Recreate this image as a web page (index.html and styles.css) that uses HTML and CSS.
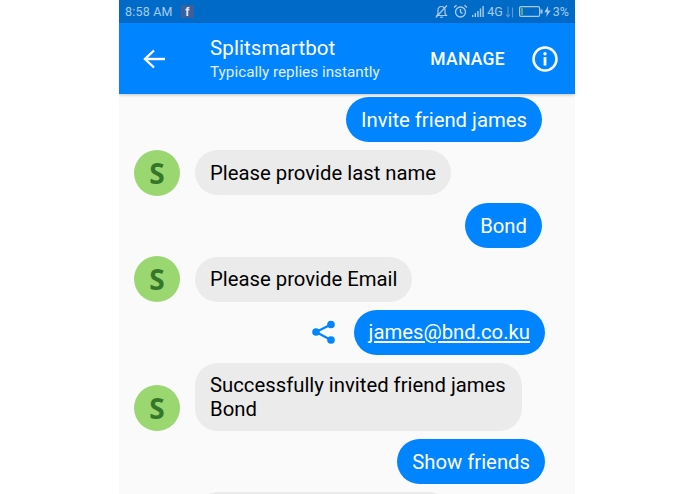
FILE: index.html
```html
<!DOCTYPE html>
<html lang="en">
<head>
<meta charset="utf-8">
<title>Splitsmartbot</title>
<link rel="stylesheet" href="styles.css">
</head>
<body>
<div class="phone">
  <div class="status">
    <div class="status-left">
      <span class="time">8:58 AM</span>
      <span class="fb">f</span>
    </div>
    <div class="status-right">
      <svg class="bell" width="15" height="15" viewBox="0 0 15 15" fill="none" stroke="#a9cbec" stroke-width="1.2"><path d="M3 11.5h9.5L11 9.5V6.2C11 4 9.5 2.5 7.5 2.5S4 4 4 6.2v3.3z"/><path d="M6.2 13.2h2.6"/><path d="M1.8 13.5 13 1.5"/></svg>
      <svg class="alarm" width="15" height="15" viewBox="0 0 15 15" fill="none" stroke="#a9cbec" stroke-width="1.3"><circle cx="7.5" cy="8" r="5"/><path d="M7.5 5v3.2l2 1.2"/><path d="M1 3.5 3.5 1.2M14 3.5 11.5 1.2"/></svg>
      <svg class="signal" width="14" height="11" viewBox="0 0 14 11" fill="#a9cbec"><rect x="0" y="9" width="1.4" height="2"/><rect x="2.6" y="7" width="1.4" height="4"/><rect x="5.2" y="5" width="1.4" height="6"/><rect x="7.8" y="2.5" width="1.4" height="8.5"/><rect x="10.4" y="0" width="1.4" height="11"/></svg>
      <span class="net">4G</span>
      <svg class="updown" width="10" height="12" viewBox="0 0 10 12" fill="none" stroke="#5f97d3" stroke-width="1.1"><path d="M3 0.5v10M1 8.5l2 2.3 2-2.3"/><path d="M7.5 11.5V1.5"/></svg>
      <svg class="battery" width="24" height="11" viewBox="0 0 24 11"><rect x="0.6" y="0.6" width="20" height="9.8" rx="1.5" fill="none" stroke="#a9cbec" stroke-width="1.2"/><rect x="2" y="2" width="2" height="7" fill="#5fa868"/><rect x="21.5" y="3.5" width="2" height="4" fill="#a9cbec"/></svg>
      <svg class="bolt" width="7" height="11" viewBox="0 0 7 11" fill="#a9cbec"><path d="M4.2 0 .4 6.2h2.5L2.2 11 6.6 4.4H3.9z"/></svg>
      <span class="pct">3%</span>
    </div>
  </div>

  <header class="bar">
    <svg class="back" width="24" height="24" viewBox="0 0 24 24" fill="none" stroke="#fff" stroke-width="2.4"><path d="M23 12H3"/><path d="M12 3.5 3 12l9 8.5"/></svg>
    <div class="title">
      <div class="name">Splitsmartbot</div>
      <div class="sub">Typically replies instantly</div>
    </div>
    <span class="manage">MANAGE</span>
    <svg class="info" width="26" height="26" viewBox="0 0 26 26" fill="none"><circle cx="13" cy="13" r="11.5" stroke="#fff" stroke-width="2.5"/><circle cx="13" cy="7.8" r="1.7" fill="#fff"/><rect x="11.6" y="11" width="2.8" height="8.5" fill="#fff"/></svg>
  </header>

  <main class="chat">
    <div class="row out"><div class="bubble me">Invite friend james</div></div>
    <div class="row in"><div class="avatar">S</div><div class="bubble them">Please provide last name</div></div>
    <div class="row out"><div class="bubble me">Bond</div></div>
    <div class="row in"><div class="avatar">S</div><div class="bubble them">Please provide Email</div></div>
    <div class="row out wide">
      <svg class="share" width="26" height="26" viewBox="0 0 26 26" fill="#0084ff"><circle cx="20" cy="5.5" r="3.8"/><circle cx="5" cy="13" r="3.8"/><circle cx="20" cy="21" r="3.8"/><path d="M20 5.5 5 13l15 8" fill="none" stroke="#0084ff" stroke-width="2.2"/></svg>
      <div class="bubble me link">james@bnd.co.ku</div>
    </div>
    <div class="row in tall"><div class="avatar">S</div><div class="bubble them multi">Successfully invited friend james Bond</div></div>
    <div class="row out wide"><div class="bubble me">Show friends</div></div>
    <div class="row in"><div class="avatar spacer"></div><div class="bubble them partial"></div></div>
  </main>
</div>
</body>
</html>
```

FILE: styles.css
```css
html, body {
  margin: 0;
  padding: 0;
  background: #fff;
  height: 100%;
  overflow: hidden;
}
.phone {
  width: 456px;
  height: 494px;
  margin-left: 119px;
  background: #fafafa;
  font-family: Roboto, "Liberation Sans", sans-serif;
  display: flex;
  flex-direction: column;
  overflow: hidden;
}
.status {
  height: 23px;
  flex: none;
  background: #006ac8;
  color: #a9cbec;
  display: flex;
  align-items: center;
  justify-content: space-between;
  padding: 0 6px;
  font-size: 12.5px;
  box-sizing: border-box;
}
.status-left, .status-right {
  display: flex;
  align-items: center;
}
.time { letter-spacing: 0.2px; }
.fb {
  width: 13px;
  height: 13px;
  margin-left: 8px;
  background: #3f5f9c;
  color: #e6ecf6;
  font: bold 12px/14px "Liberation Sans", sans-serif;
  text-align: center;
  display: block;
}
.bell { margin-right: 4px; }
.alarm { margin-right: 4px; }
.signal { margin-right: 1px; }
.net { margin-right: 2px; }
.updown { margin-right: 4px; }
.battery { margin-right: 1px; }
.bolt { margin-right: 2px; }
.bar {
  height: 71px;
  flex: none;
  background: #0084ff;
  color: #fff;
  display: flex;
  align-items: center;
  padding: 0 17px 0 23px;
  box-sizing: border-box;
  box-shadow: 0 1px 3px rgba(0,0,0,.22);
  position: relative;
  z-index: 1;
}
.back { flex: none; }
.title {
  margin-left: 44px;
  flex: 1;
}
.name { font-size: 20.5px; line-height: 26px; letter-spacing: .1px; }
.sub { font-size: 15.3px; line-height: 22px; color: #e2f0ff; }
.manage {
  font-size: 17.5px;
  font-weight: 500;
  letter-spacing: .3px;
  margin-right: 27px;
}
.info { flex: none; }
.chat {
  flex: 1;
  padding: 3px 33px 0 15px;
  display: flex;
  flex-direction: column;
  gap: 8px;
}
.row {
  display: flex;
  align-items: center;
  flex: none;
  height: 45.2px;
}
.row.tall { height: 68px; align-items: flex-end; }
.row.out { justify-content: flex-end; }
.row.wide { margin-right: -3px; }
.bubble {
  font-size: 20.3px;
  line-height: 24px;
  padding: 10.5px 15px;
  border-radius: 22.5px;
}
.me { background: #0084ff; color: #fff; }
.them { background: #ebebeb; color: #000; margin-left: 15px; }
.link { text-decoration: underline; }
.multi { width: 327px; box-sizing: border-box; padding-top: 10px; padding-bottom: 10px; align-self: flex-start; }
.avatar {
  width: 46px;
  height: 46px;
  border-radius: 50%;
  background: #9ad770;
  color: #35762a;
  font: 700 28px/46px "Open Sans", sans-serif;
  text-align: center;
  flex: none;
}
.spacer { visibility: hidden; }
.partial { width: 257px; height: 45px; box-sizing: border-box; }
.share { margin-right: 17px; }
```
